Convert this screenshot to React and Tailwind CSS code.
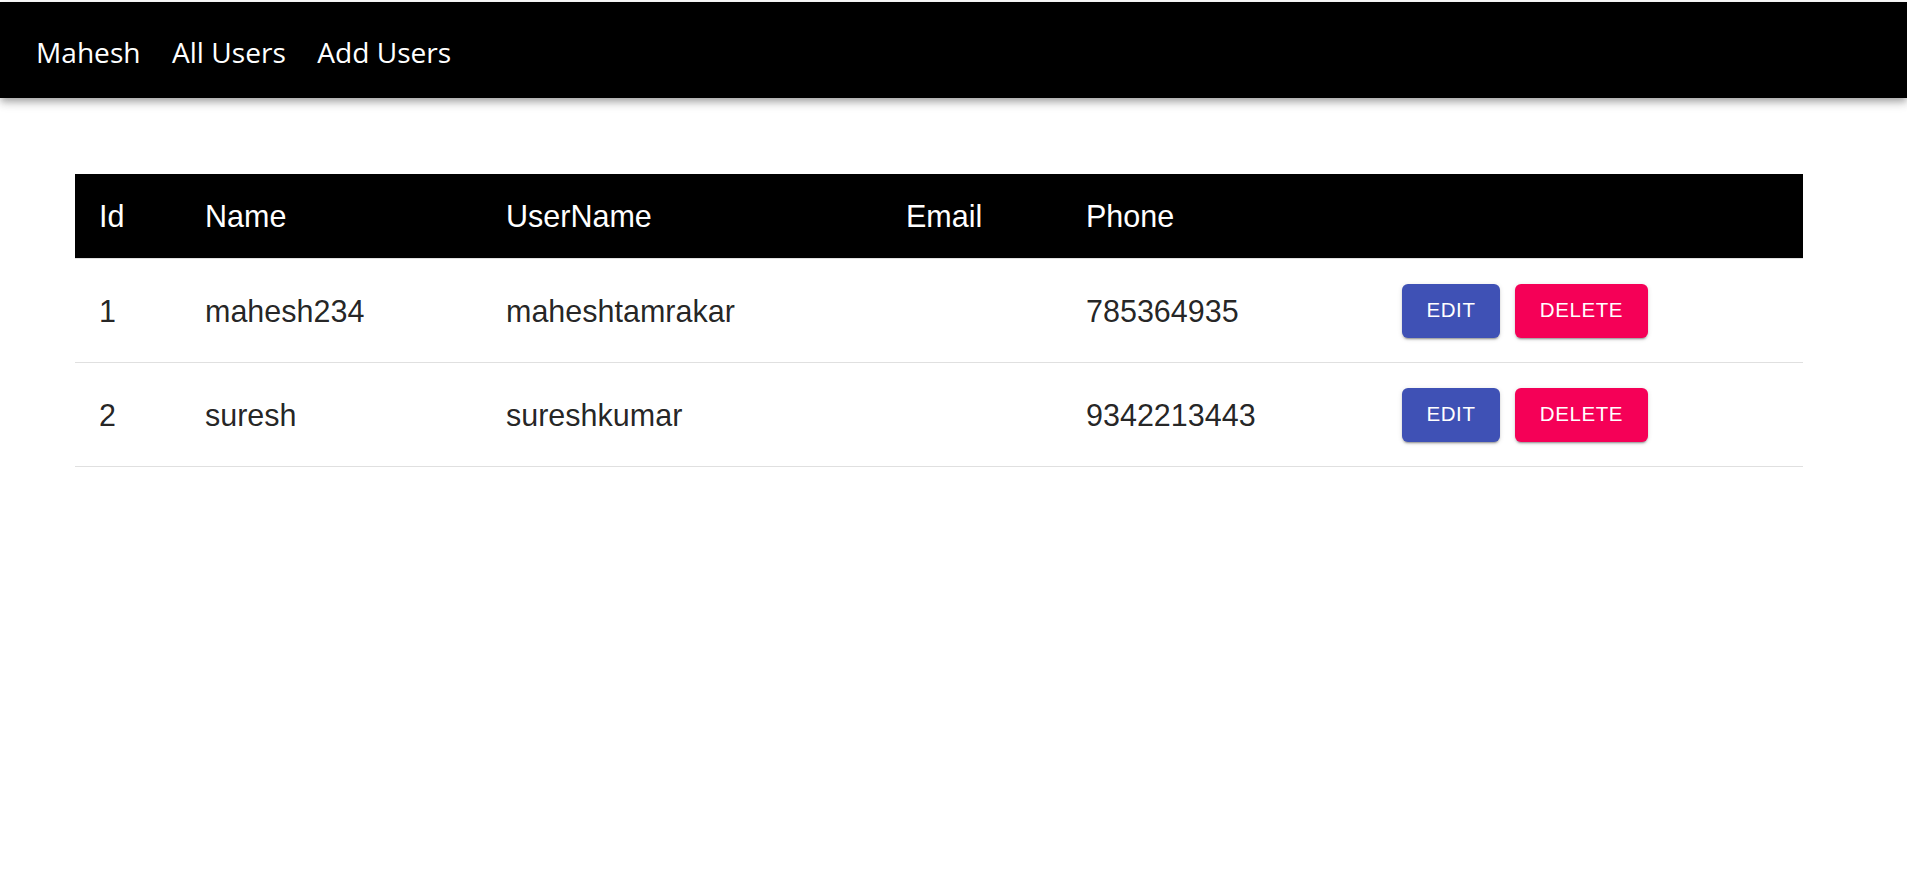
import React from "react";

const users = [
  { id: 1, name: "mahesh234", username: "maheshtamrakar", email: "", phone: "785364935" },
  { id: 2, name: "suresh", username: "sureshkumar", email: "", phone: "9342213443" },
];

const cols = "grid grid-cols-[108px_301px_400px_180px_316px_1fr]";

export default function App() {
  return (
    <div className="min-h-[890px] bg-white">
      <nav className="mt-[2px] h-[96px] bg-black flex items-center pt-[4px] pl-[36px] gap-[31.5px] shadow-[0px_3px_6px_-1.5px_rgba(0,0,0,0.2),0px_6px_7.5px_0px_rgba(0,0,0,0.14),0px_1.5px_15px_0px_rgba(0,0,0,0.12)] relative z-10">
        {["Mahesh", "All Users", "Add Users"].map((t) => (
          <a key={t} className="text-white text-[28.1px] leading-[38px] font-['Open_Sans',sans-serif] cursor-pointer">
            {t}
          </a>
        ))}
      </nav>

      <div className="mt-[76px] ml-[75px] w-[1728px] font-['Liberation_Sans',Arial,sans-serif] text-[30.5px]">
        <div className={`${cols} h-[85px] bg-black text-white border-b border-[#e0e0e0] items-center`}>
          {["Id", "Name", "UserName", "Email", "Phone", ""].map((h, i) => (
            <div key={i} className={`${i === 0 ? "pl-[24px]" : "pl-[22px]"} leading-[36px]`}>
              {h}
            </div>
          ))}
        </div>
        {users.map((u) => (
          <div key={u.id} className={`${cols} h-[104px] border-b border-[#e0e0e0] items-center text-[rgba(0,0,0,0.87)]`}>
            <div className="pl-[24px] leading-[36px]">{u.id}</div>
            <div className="pl-[22px] leading-[36px]">{u.name}</div>
            <div className="pl-[22px] leading-[36px]">{u.username}</div>
            <div className="pl-[22px] leading-[36px]">{u.email}</div>
            <div className="pl-[22px] leading-[36px]">{u.phone}</div>
            <div className="pl-[22px] flex gap-[15px]">
              <button className="w-[98px] h-[54px] rounded-[6px] bg-[#3f51b5] text-white text-[20.5px] tracking-[0.02857em] uppercase shadow-[0px_3px_1px_-2px_rgba(0,0,0,0.2),0px_2px_2px_0px_rgba(0,0,0,0.14),0px_1px_5px_0px_rgba(0,0,0,0.12)]">
                Edit
              </button>
              <button className="w-[133px] h-[54px] rounded-[6px] bg-[#f50057] text-white text-[20.5px] tracking-[0.02857em] uppercase shadow-[0px_3px_1px_-2px_rgba(0,0,0,0.2),0px_2px_2px_0px_rgba(0,0,0,0.14),0px_1px_5px_0px_rgba(0,0,0,0.12)]">
                Delete
              </button>
            </div>
          </div>
        ))}
      </div>
    </div>
  );
}
